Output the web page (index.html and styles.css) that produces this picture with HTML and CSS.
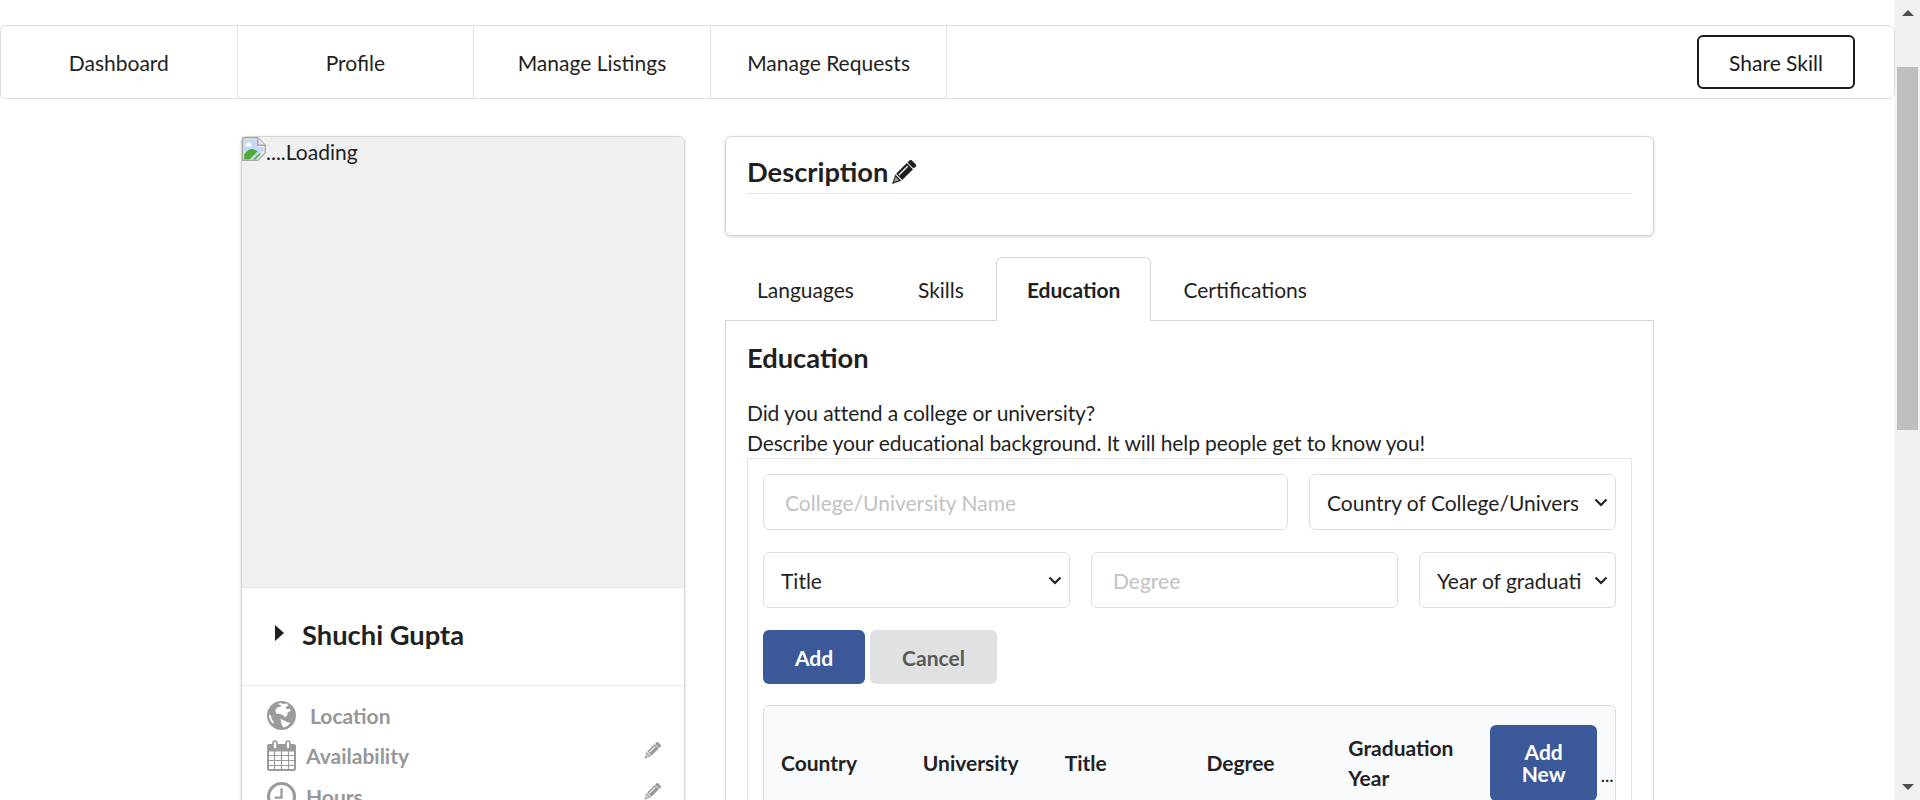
FILE: index.html
```html
<!DOCTYPE html>
<html lang="en">
<head>
  <meta charset="UTF-8" />
  <title>Profile</title>
  <link rel="stylesheet" href="styles.css">
</head>
<body>
  <svg class="defs" width="0" height="0">
    <symbol id="pencil" viewBox="0 0 24 24">
      <g transform="rotate(45 12 12)">
        <rect x="8" y="-2" width="8" height="4.2" rx="1" />
        <rect x="8" y="3" width="8" height="14" />
        <rect x="10" y="4.5" width="1.3" height="11.5" fill="#fff" />
        <path d="M8 18h8l-4 8z" />
        <path d="M9.6 19.2h4.8l-2.4 4.6z" fill="#fff" opacity=".55" />
        <path d="M11 24l1 2 1-2z" />
      </g>
    </symbol>
  </svg>

  <div class="app">
    <div class="page">
      <nav class="menu">
        <a class="menu-item">Dashboard</a>
        <a class="menu-item">Profile</a>
        <a class="menu-item">Manage Listings</a>
        <a class="menu-item">Manage Requests</a>
        <div class="menu-right">
          <button class="share-btn">Share Skill</button>
        </div>
      </nav>

      <div class="content">
        <aside class="card">
          <div class="photo">
            <svg class="broken-img" viewBox="0 0 16 16">
              <path d="M.5.5h10l5 5v5l-5 5H.5z" fill="#fff" stroke="#a8a8a8" />
              <path d="M10.5.5v5h5" fill="#e8e8e8" stroke="#a8a8a8" />
              <path d="M1.5 1.5h8.5v5h4.5v3L9 15H1.5z" fill="#c5d8f5" />
              <path d="M3 4.5a1.6 1.6 0 0 1 3 0a1.2 1.2 0 0 1 0 1.8h-3a1.2 1.2 0 0 1 0-1.8z" fill="#fff" />
              <path d="M1.5 15v-3.500q3-4 6-3.500l3 1.500-5.500 5.500z" fill="#4fa834" />
              <path d="M7.500 15l4-4 1 .5-3.500 3.500z" fill="#4fa834" />
            </svg>
            <span>....Loading</span>
          </div>

          <div class="name-row">
            <span class="caret"></span>
            <h3 class="name">Shuchi Gupta</h3>
          </div>

          <div class="meta">
            <div class="meta-row meta-location">
              <svg class="meta-icon" viewBox="0 0 28 28">
                <circle cx="14" cy="14" r="14" fill="#9b9b9b" />
                <path d="M8 3.500l5-1.500 3 1 3.500-.5 1 2-2.500 1.500 1 2 3-.5 1 2-3 1.500-.5 3-2.500 2-1.500-2.500-3-1-3.500-.5-1-3 2-3 3-.5.500-1.500-3-1z" fill="#fff" />
                <path d="M13 17l3 1.500 3.500 2 3 .5-2.500 3-4 1.500-2-3z" fill="#fff" />
                <path d="M2 13l2 1.500.5 3 2 2.500-.5 2-2.500-2.500-1.500-4z" fill="#fff" />
              </svg>
              <span>Location</span>
            </div>
            <div class="meta-row">
              <svg class="meta-icon cal" viewBox="0 0 29 31" fill="none" stroke="#9b9b9b">
                <rect x="1" y="5" width="27" height="25" rx="1.500" stroke-width="2" />
                <path d="M1 5h27v6H1z" fill="#9b9b9b" />
                <path d="M1 15.500h27M1 20.500h27M1 25.500h27M7.500 11v19M14.500 11v19M21.500 11v19" stroke-width="1.200" />
                <rect x="6" y="1" width="4" height="8" rx="2" fill="#fff" stroke-width="1.600" />
                <rect x="19" y="1" width="4" height="8" rx="2" fill="#fff" stroke-width="1.600" />
              </svg>
              <span>Availability</span>
              <svg class="edit-icon"><use href="#pencil" /></svg>
            </div>
            <div class="meta-row">
              <svg class="meta-icon" viewBox="0 0 28 28" fill="none" stroke="#9b9b9b" stroke-width="3">
                <circle cx="14" cy="14" r="12.500" />
                <path d="M14 6v9H7.500" stroke-width="2.200" />
              </svg>
              <span>Hours</span>
              <svg class="edit-icon"><use href="#pencil" /></svg>
            </div>
          </div>
        </aside>

        <main class="main-col">
          <section class="desc-card">
            <h3 class="desc-title">Description<svg class="desc-pencil"><use href="#pencil" /></svg></h3>
          </section>

          <div class="tabs">
            <a class="tab">Languages</a>
            <a class="tab">Skills</a>
            <a class="tab active">Education</a>
            <a class="tab">Certifications</a>
          </div>

          <section class="tab-panel">
            <h3 class="panel-title">Education</h3>
            <p class="panel-text">Did you attend a college or university?<br>Describe your educational background. It will help people get to know you!</p>

            <div class="edu-box">
              <div class="form-row">
                <input class="field grow-college" type="text" placeholder="College/University Name">
                <select class="field country">
                  <option>Country of College/University</option>
                </select>
              </div>
              <div class="form-row">
                <select class="field title-select">
                  <option>Title</option>
                </select>
                <input class="field degree" type="text" placeholder="Degree">
                <select class="field year">
                  <option>Year of graduation</option>
                </select>
              </div>
              <div class="btn-row">
                <button class="btn btn-primary">Add</button>
                <button class="btn btn-grey">Cancel</button>
              </div>

              <table class="edu-table">
                <thead>
                  <tr>
                    <th>Country</th>
                    <th>University</th>
                    <th>Title</th>
                    <th>Degree</th>
                    <th>Graduation Year</th>
                    <th class="action-cell"><button class="btn btn-primary add-new">Add New</button> …</th>
                  </tr>
                </thead>
              </table>
            </div>
          </section>
        </main>
      </div>
    </div>

    <div class="scrollbar">
      <span class="arrow-up"></span>
      <span class="thumb"></span>
      <span class="arrow-down"></span>
    </div>
  </div>
</body>
</html>
```

FILE: styles.css
```css
* { box-sizing: border-box; }
html, body { margin: 0; height: 800px; overflow: hidden; }
body { font-family: Lato, "Liberation Sans", sans-serif; font-size: 21px; color: #1f1f1f; background: #fff; }
.defs { display: block; height: 0; }

.app { display: flex; height: 800px; }
.page { flex: 1; min-width: 0; height: 800px; overflow: hidden; padding-top: 25px; }

/* scrollbar */
.scrollbar { width: 25px; background: #f1f1f1; display: flex; flex-direction: column; align-items: center; }
.arrow-up { margin-top: 10px; border: 6px solid transparent; border-top: 0; border-bottom-color: #505050; }
.thumb { width: 21px; height: 363px; margin-top: 51px; background: #bebebe; }
.arrow-down { margin-top: auto; margin-bottom: 10px; border: 6px solid transparent; border-bottom: 0; border-top-color: #505050; }

/* top menu */
.menu { display: flex; height: 74px; border: 1px solid #dedede; border-radius: 6px; }
.menu-item { width: 236.6px; display: flex; align-items: center; justify-content: center; border-right: 1px solid #e2e2e2; }
.menu-right { margin-left: auto; display: flex; align-items: center; padding-right: 39px; }
.share-btn { width: 158px; height: 54px; font: inherit; color: #1a1a1a; background: #fff; border: 2px solid #1b1c1d; border-radius: 6px; }

.content { display: flex; gap: 40px; width: 1413px; margin: 37px auto 0; align-items: flex-start; }

/* left card */
.card { width: 444px; flex: none; border: 1px solid #d4d4d5; border-radius: 6px; box-shadow: 0 1px 3px #d4d4d5; }
.photo { height: 450px; background: #f0f0f0; display: flex; align-items: flex-start; line-height: 30px; border-radius: 6px 6px 0 0; }
.broken-img { width: 24px; height: 24px; flex: none; }
.name-row { height: 99px; display: flex; align-items: center; padding: 0 0 5px 33px; border-top: 1px solid #e6e6e6; border-bottom: 1px solid #ececec; }
.caret { border: 8px solid transparent; border-right: 0; border-left: 9px solid #1f1f1f; margin-right: 18px; margin-top: -2px; }
.name { margin: 0; font-size: 27.3px; font-weight: 700; }

.meta { padding: 11px 25px 40px 25px; color: #979797; font-weight: 700; }
.meta-row { height: 41px; display: flex; align-items: center; gap: 10px; }
.meta-location { gap: 14px; height: 36px; margin-bottom: 2px; }
.meta-icon { width: 29px; height: 29px; flex: none; }
.cal { height: 31px; }
.edit-icon { width: 18px; height: 18px; margin-left: auto; margin-right: -2px; margin-top: -10px; fill: #9a9a9a; }

/* right column */
.main-col { width: 929px; flex: none; }
.desc-card { height: 100px; padding: 18px 21px 0; border: 1px solid #d4d4d5; border-radius: 6px; box-shadow: 0 1px 3px #d4d4d5; }
.desc-title { margin: 0; height: 39px; font-size: 27.3px; font-weight: 700; line-height: 33px; border-bottom: 1px solid #e2e2e2; display: flex; }
.desc-pencil { width: 26px; height: 26px; margin: 5px 0 0 2px; fill: #1f1f1f; }

.tabs { display: flex; margin-top: 21px; position: relative; z-index: 1; }
.tab { height: 63px; padding: 0 31px; display: flex; align-items: center; border: 1px solid transparent; border-bottom: 0; }
.tab.active { background: #fff; border-color: #d4d4d5; border-radius: 6px 6px 0 0; font-weight: 700; height: 64px; margin-bottom: -1px; padding: 0 30px; }

.tab-panel { border: 1px solid #d4d4d5; padding: 18px 21px 40px; }
.panel-title { margin: 0; font-size: 27.3px; font-weight: 700; line-height: 37px; }
.panel-text { margin: 22px 0 0; line-height: 30px; letter-spacing: -.1px; }

.edu-box { padding: 15px 15px 20px; border: 1px solid #e2e2e2; }
.form-row { display: flex; gap: 21px; margin-bottom: 22px; }
.field { height: 56px; font: inherit; color: #1f1f1f; background: #fff; border: 1px solid #dedede; border-radius: 6px; }
.field::placeholder { color: #c2c2c2; }
input.field { padding: 0 21px; }
select.field { appearance: none; padding: 0 37px 0 17px; background: #fff url("data:image/svg+xml,%3Csvg xmlns='http://www.w3.org/2000/svg' width='14' height='9' viewBox='0 0 14 9'%3E%3Cpath d='M1.500 1.500L7 7l5.500-5.500' fill='none' stroke='%23222' stroke-width='2.200'/%3E%3C/svg%3E") no-repeat right 7px center; }
.grow-college { width: 525px; }
.country { width: 307px; }
.title-select { width: 307px; }
.degree { width: 307px; }
select.year { width: 197px; padding-right: 33px; }

.btn { font: inherit; font-weight: 700; border: 0; border-radius: 6px; }
.btn-primary { color: #fff; background: #3b5998; }
.btn-grey { color: #5a5a5a; background: #e0e1e2; }
.btn-row { display: flex; gap: 5px; }
.btn-row .btn { height: 54px; }
.btn-row .btn-primary { width: 102px; }
.btn-row .btn-grey { width: 127px; }

.edu-table { width: 853px; margin-top: 21px; table-layout: fixed; border-collapse: separate; border-spacing: 0; background: #f9fafb; border: 1px solid #dedede; border-radius: 6px; }
.edu-table th { padding: 19px 17px; text-align: left; font-weight: 700; line-height: 30px; color: #222; vertical-align: middle; }
.action-cell { overflow: hidden; white-space: nowrap; padding-right: 0 !important; font-size: 16px; }
.add-new { width: 107px; height: 76px; font-size: 21px; line-height: 22px; white-space: normal; padding: 0 20px; }
```
